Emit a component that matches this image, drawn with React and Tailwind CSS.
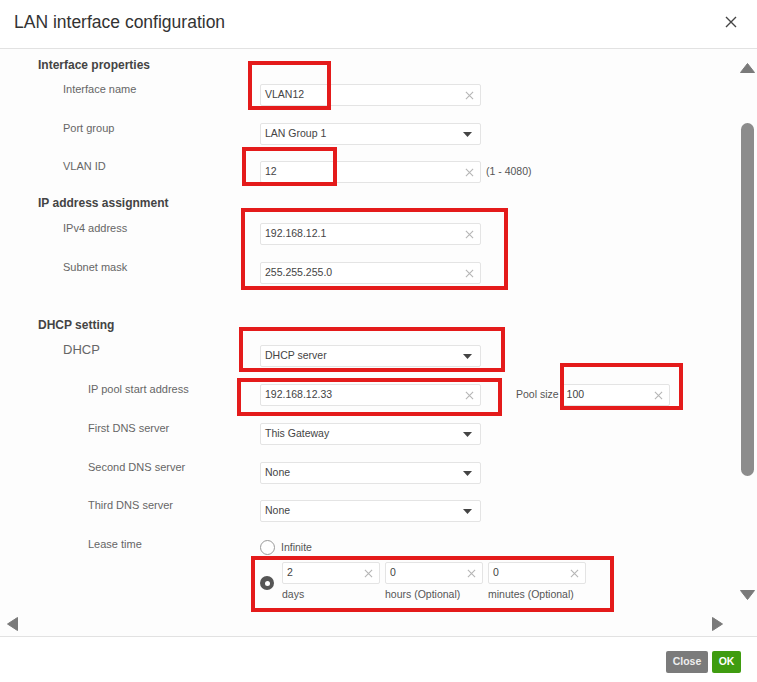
import React from 'react';

const font = { fontFamily: '"Liberation Sans", Arial, sans-serif' };

const ClearX = () => (
  <svg width="9" height="9" viewBox="0 0 10 10" className="shrink-0">
    <path d="M1 1L9 9M9 1L1 9" stroke="#b5b5b5" strokeWidth="1.2" />
  </svg>
);

const Caret = () => (
  <svg width="9" height="5" viewBox="0 0 9 5" className="shrink-0">
    <path d="M0 0H9L4.5 5Z" fill="#444" />
  </svg>
);

const TextBox = ({ value, width = 'w-[221px]' }) => (
  <div className={`${width} h-[22px] flex items-center justify-between pl-[4px] pr-[6px] bg-white border border-[#e4e4e4] rounded-[2px] text-[10.5px] text-[#444]`}>
    <span>{value}</span>
    <ClearX />
  </div>
);

const SelectBox = ({ value }) => (
  <div className="w-[221px] h-[22px] flex items-center justify-between pl-[4px] pr-[8px] bg-white border border-[#e4e4e4] rounded-[2px] text-[10.5px] text-[#444]">
    <span>{value}</span>
    <Caret />
  </div>
);

const Row = ({ label, indent = 'pl-[63px]', labelClass = 'text-[11px] -mt-[2px]', mt, children }) => (
  <div className={`flex items-start ${mt}`}>
    <div className={`w-[260px] ${indent} ${labelClass} leading-[15px] text-[#666]`}>{label}</div>
    <div className="flex items-center">{children}</div>
  </div>
);

const Heading = ({ children, mt }) => (
  <div className={`pl-[38px] text-[12px] font-bold leading-[15px] text-[#444] ${mt}`}>{children}</div>
);

const RedBox = ({ cls }) => (
  <div className={`absolute border-[4px] border-[#e41b1b] pointer-events-none ${cls}`} />
);

export default function App() {
  return (
    <div className="relative w-[757px] h-[682px] bg-white flex flex-col overflow-hidden" style={font}>
      {/* header */}
      <div className="h-[49px] shrink-0 flex items-center justify-between pl-[14px] pr-[20px] border-b border-[#e2e2e2]">
        <span className="text-[17.5px] text-[#333] -mt-[3px]">LAN interface configuration</span>
        <svg width="12" height="12" viewBox="0 0 12 12" className="-mt-[4px]">
          <path d="M1 1L11 11M11 1L1 11" stroke="#444" strokeWidth="1.4" />
        </svg>
      </div>

      {/* body */}
      <div className="flex-1 flex flex-col min-h-0">
        <div className="flex-1 flex min-h-0">
          <div className="flex-1 pt-[9px] bg-[#fdfdfd]">
            <Heading>Interface properties</Heading>
            <Row label="Interface name" mt="mt-[11px]">
              <TextBox value="VLAN12" />
            </Row>
            <Row label="Port group" mt="mt-[17px]">
              <SelectBox value="LAN Group 1" />
            </Row>
            <Row label="VLAN ID" mt="mt-[16px]">
              <TextBox value="12" />
              <span className="ml-[5px] text-[10.5px] text-[#555]">(1 - 4080)</span>
            </Row>

            <Heading mt="mt-[13px]">IP address assignment</Heading>
            <Row label="IPv4 address" mt="mt-[12px]">
              <TextBox value="192.168.12.1" />
            </Row>
            <Row label="Subnet mask" mt="mt-[17px]">
              <TextBox value="255.255.255.0" />
            </Row>

            <Heading mt="mt-[34px]">DHCP setting</Heading>
            <Row label="DHCP" labelClass="text-[13px] -mt-[3px]" mt="mt-[12px]">
              <SelectBox value="DHCP server" />
            </Row>
            <Row label="IP pool start address" indent="pl-[88px]" mt="mt-[17px]">
              <TextBox value="192.168.12.33" />
              <span className="ml-[35px] mr-[3px] text-[10.5px] text-[#555]">Pool size</span>
              <TextBox value="100" width="w-[108px]" />
            </Row>
            <Row label="First DNS server" indent="pl-[88px]" mt="mt-[17px]">
              <SelectBox value="This Gateway" />
            </Row>
            <Row label="Second DNS server" indent="pl-[88px]" mt="mt-[17px]">
              <SelectBox value="None" />
            </Row>
            <Row label="Third DNS server" indent="pl-[88px]" mt="mt-[16px]">
              <SelectBox value="None" />
            </Row>

            <div className="flex items-start mt-[18px]">
              <div className="w-[260px] pl-[88px] text-[11px] leading-[15px] text-[#666] -mt-[3px]">Lease time</div>
              <div className="flex flex-col">
                <div className="flex items-center gap-[6px] h-[15px]">
                  <span className="w-[15px] h-[15px] rounded-full border border-[#9a9a9a] bg-white" />
                  <span className="text-[10.5px] text-[#555]">Infinite</span>
                </div>
                <div className="flex items-start mt-[7px]">
                  <span className="mt-[14px] w-[14px] h-[14px] rounded-full bg-[#555] flex items-center justify-center">
                    <span className="w-[5px] h-[5px] rounded-full bg-white" />
                  </span>
                  <div className="flex gap-[5px] ml-[8px]">
                    {[
                      ['2', 'days'],
                      ['0', 'hours (Optional)'],
                      ['0', 'minutes (Optional)'],
                    ].map(([v, l], i) => (
                      <div key={i} className="flex flex-col">
                        <TextBox value={v} width="w-[98px]" />
                        <span className="mt-[4px] text-[10.5px] leading-[13px] text-[#555]">{l}</span>
                      </div>
                    ))}
                  </div>
                </div>
              </div>
            </div>
          </div>

          {/* vertical scrollbar */}
          <div className="w-[20px] shrink-0 flex flex-col items-center pt-[14px] pb-[12px] bg-[#fdfdfd]">
            <svg width="15" height="10" viewBox="0 0 15 10">
              <path d="M7.5 0.5L14.5 9.5H0.5Z" fill="#7a7a7a" strokeLinejoin="round" stroke="#7a7a7a" />
            </svg>
            <div className="mt-[50px] w-[13px] h-[353px] rounded-full bg-[#8c8c8c]" />
            <div className="flex-1" />
            <svg width="15" height="10" viewBox="0 0 15 10">
              <path d="M0.5 0.5H14.5L7.5 9.5Z" fill="#7a7a7a" strokeLinejoin="round" stroke="#7a7a7a" />
            </svg>
          </div>
        </div>

        {/* horizontal scrollbar */}
        <div className="h-[24px] shrink-0 flex items-center justify-between pl-[7px] pr-[34px] bg-[#fdfdfd]">
          <svg width="11" height="14" viewBox="0 0 11 14">
            <path d="M10.5 0.5V13.5L0.5 7Z" fill="#7a7a7a" strokeLinejoin="round" stroke="#7a7a7a" />
          </svg>
          <svg width="11" height="14" viewBox="0 0 11 14">
            <path d="M0.5 0.5V13.5L10.5 7Z" fill="#7a7a7a" strokeLinejoin="round" stroke="#7a7a7a" />
          </svg>
        </div>
      </div>

      {/* footer */}
      <div className="h-[46px] shrink-0 border-t border-[#e2e2e2] flex justify-end items-start pt-[14px] pr-[16px] gap-[4px]">
        <button className="w-[42px] h-[22px] bg-[#7b7b7b] text-[#eee] text-[10.5px] font-bold rounded-[2px]">Close</button>
        <button className="w-[29px] h-[22px] bg-[#3f9c10] text-white text-[10.5px] font-bold rounded-[2px]">OK</button>
      </div>

      {/* annotation boxes */}
      <RedBox cls="left-[248px] top-[61px] w-[83px] h-[49px]" />
      <RedBox cls="left-[242px] top-[147px] w-[95px] h-[39px]" />
      <RedBox cls="left-[241px] top-[208px] w-[267px] h-[82px]" />
      <RedBox cls="left-[239px] top-[327px] w-[266px] h-[45px]" />
      <RedBox cls="left-[237px] top-[378px] w-[265px] h-[38px]" />
      <RedBox cls="left-[560px] top-[363px] w-[123px] h-[47px]" />
      <RedBox cls="left-[251px] top-[556px] w-[363px] h-[56px]" />
    </div>
  );
}
